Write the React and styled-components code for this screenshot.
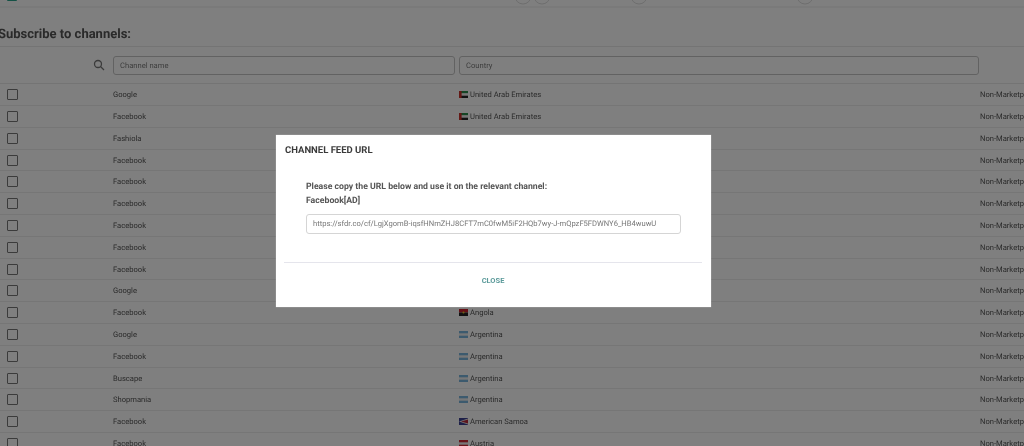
import React from "react";
import styled, { createGlobalStyle } from "styled-components";

const Global = createGlobalStyle`
  html, body { margin: 0; padding: 0; height: 446px; overflow: hidden; background: #fff; }
  body { font-family: Roboto, "Liberation Sans", sans-serif; color: #444; text-rendering: geometricPrecision; }
`;
const Page = styled.div`
  width: 1024px; height: 446px; overflow: hidden; position: relative; filter: blur(0.4px);
`;
const TopStrip = styled.svg`
  display: block; width: 1024px; height: 8px;
`;
const Heading = styled.h2`
  margin: 0 0 0 -2px; padding: 19px 0 3.3px; font-size: 13px; line-height: 16px; font-weight: 700; color: #555;
  border-bottom: 1px solid #e8e8e8; width: 1026px; height: 16px;
`;
const FilterRow = styled.div`
  display: grid; grid-template-columns: 109px 342px 520px; column-gap: 4px;
  height: 36px; align-items: center; border-bottom: 1px solid #e8e8e8;
`;
const SearchCell = styled.div`
  display: flex; justify-content: flex-end; padding-right: 4px; color: #777;
`;
const FilterInput = styled.div`
  height: 17px; border: 1px solid #c4c4c4; border-radius: 3px; padding-left: 6px;
  font-size: 7.6px; line-height: 17px; color: #7c7c7c;
`;
const Row = styled.div`
  display: grid; grid-template-columns: 113px 346px 521px 60px; height: 20.8px; align-items: center;
  border-bottom: 1px solid #ededed; font-size: 7.6px; color: #555; white-space: nowrap; width: 1024px;
`;
const Check = styled.span`
  display: block; width: 9px; height: 9px; margin-left: 7px; border: 1.2px solid #777; border-radius: 1px;
`;
const Country = styled.span`
  display: flex; align-items: center; gap: 2px;
`;
const Flag = styled.svg`
  width: 9px; height: 7px; flex: none;
`;
const Overlay = styled.div`
  position: absolute; inset: 0; background: rgba(0,0,0,.5); padding: 135px 0 0 276px;
`;
const Modal = styled.div`
  width: 435px; height: 172px; background: #fff; box-sizing: border-box; padding: 0 9px 0 8px;
  display: flex; flex-direction: column; box-shadow: 0 0 1px rgba(255,255,255,.6);
`;
const ModalTitle = styled.h3`
  margin: 0; padding: 10px 0 0 1px; font-size: 9.5px; line-height: 12px; font-weight: 700; color: #3a3a3a; height: 18px; box-sizing: content-box;
`;
const ModalBody = styled.div`
  padding: 17px 21px 0 22px; height: 100px; box-sizing: border-box; border-bottom: 1px solid #e5e5ec;
`;
const BodyLine = styled.p`
  margin: 0; font-size: 8.7px; line-height: 14px; font-weight: 700; color: #555;
`;
const UrlField = styled.div`
  margin-top: 6px; height: 18px; width: 373px; box-sizing: content-box; border: 1px solid #d5d5d5; border-radius: 3px;
  padding: 0; text-indent: 6px; font-size: 7.6px; line-height: 18px; color: #777; white-space: nowrap; overflow: hidden;
`;
const Footer = styled.div`
  display: flex; justify-content: center; padding-top: 12px;
`;
const CloseButton = styled.button`
  border: 0; background: none; padding: 0; margin: 0; font: 700 7.5px/12px Roboto, sans-serif; color: #5b9a9a;
`;

const flags = {
  uae: <><rect width="9" height="2.4" y="0" fill="#2a8a4a"/><rect width="9" height="2.3" y="2.4" fill="#eee"/><rect width="9" height="2.3" y="4.7" fill="#222"/><rect width="2.6" height="7" fill="#c8312a"/></>,
  ang: <><rect width="9" height="3.5" fill="#c8202a"/><rect width="9" height="3.5" y="3.5" fill="#222"/><circle cx="4.5" cy="3.5" r="1" fill="#e8c020"/></>,
  arg: <><rect width="9" height="7" fill="#78b4dc"/><rect width="9" height="2.4" y="2.3" fill="#eee"/></>,
  asm: <><rect width="9" height="7" fill="#3a3f90"/><polygon points="0,3.5 9,0.5 9,6.5" fill="#eee"/><polygon points="2,3.5 9,1.5 9,5.5" fill="#b82a3a"/></>,
  aut: <><rect width="9" height="7" fill="#d02a35"/><rect width="9" height="2.4" y="2.3" fill="#eee"/></>,
};
const rows = [
  ["Google","United Arab Emirates","uae"],["Facebook","United Arab Emirates","uae"],["Fashiola","United Arab Emirates","uae"],
  ["Facebook","Albania","ang"],["Facebook","Albania","ang"],["Facebook","Armenia","ang"],["Facebook","Armenia","ang"],
  ["Facebook","Angola","ang"],["Facebook","Angola","ang"],["Google","Angola","ang"],["Facebook","Angola","ang"],
  ["Google","Argentina","arg"],["Facebook","Argentina","arg"],["Buscape","Argentina","arg"],["Shopmania","Argentina","arg"],
  ["Facebook","American Samoa","asm"],["Facebook","Austria","aut"],
];

export default function App() {
  return (
    <Page>
      <Global />
      <TopStrip viewBox="0 0 1024 8">
        <rect x="7" y="-3" width="10" height="4" rx="1" fill="#2aa58c" />
        <g fill="#fff" stroke="#ddd">
          <circle cx="523" cy="-4" r="8" /><circle cx="542" cy="-4" r="8" /><circle cx="639" cy="-4" r="8" /><circle cx="805" cy="-4" r="8" />
        </g>
        <line x1="0" x2="1024" y1="7" y2="7" stroke="#ebebeb" />
      </TopStrip>
      <Heading>Subscribe to channels:</Heading>
      <FilterRow>
        <SearchCell>
          <svg width="12" height="12" viewBox="0 0 24 24" fill="none" stroke="currentColor" strokeWidth="2.6">
            <circle cx="10" cy="10" r="7" /><path d="M15 15l7 7" />
          </svg>
        </SearchCell>
        <FilterInput>Channel name</FilterInput>
        <FilterInput>Country</FilterInput>
      </FilterRow>
      {rows.map(([name, country, flag], i) => (
        <Row key={i}>
          <Check />
          <span>{name}</span>
          <Country><Flag viewBox="0 0 9 7">{flags[flag]}</Flag>{country}</Country>
          <span>Non-Marketplace</span>
        </Row>
      ))}
      <Overlay>
        <Modal>
          <ModalTitle>CHANNEL FEED URL</ModalTitle>
          <ModalBody>
            <BodyLine>Please copy the URL below and use it on the relevant channel:</BodyLine>
            <BodyLine>Facebook[AD]</BodyLine>
            <UrlField>https://sfdr.co/cf/LgjXgomB-iqsfHNmZHJ8CFT7mC0fwM5iF2HQb7wy-J-mQpzF5FDWNY6_HB4wuwU</UrlField>
          </ModalBody>
          <Footer><CloseButton>CLOSE</CloseButton></Footer>
        </Modal>
      </Overlay>
    </Page>
  );
}
